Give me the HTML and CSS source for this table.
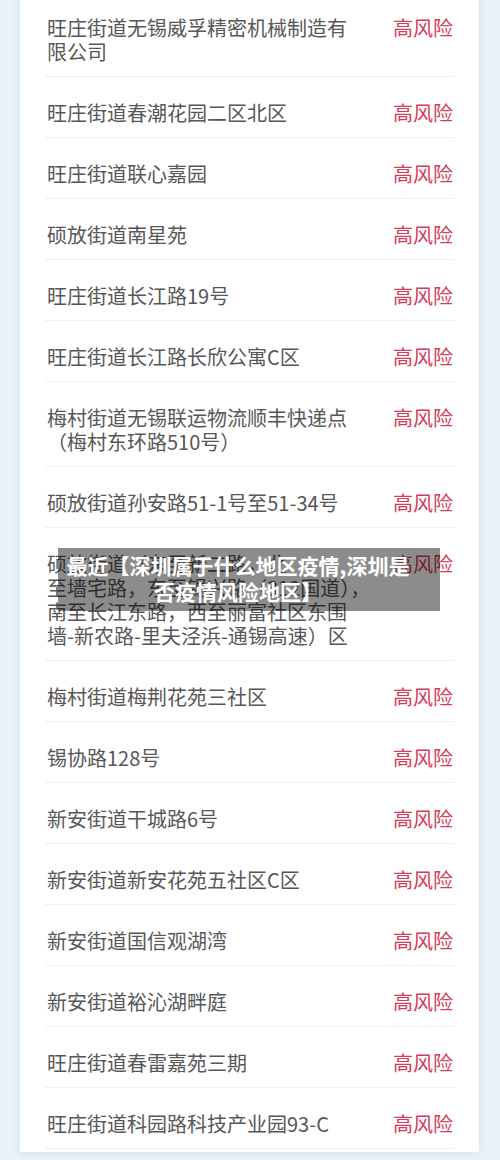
FILE: index.html
```html
<!DOCTYPE html>
<html lang="zh-CN">
<head>
  <meta charset="UTF-8">
  <title>高风险地区</title>
  <link rel="stylesheet" href="styles.css">
</head>
<body>
  <div class="card">
    <ul class="area-list">
      <li class="area"><span class="name">旺庄街道无锡威孚精密机械制造有<br>限公司</span><span class="risk">高风险</span></li>
      <li class="area"><span class="name">旺庄街道春潮花园二区北区</span><span class="risk">高风险</span></li>
      <li class="area"><span class="name">旺庄街道联心嘉园</span><span class="risk">高风险</span></li>
      <li class="area"><span class="name">硕放街道南星苑</span><span class="risk">高风险</span></li>
      <li class="area"><span class="name">旺庄街道长江路19号</span><span class="risk">高风险</span></li>
      <li class="area"><span class="name">旺庄街道长江路长欣公寓C区</span><span class="risk">高风险</span></li>
      <li class="area"><span class="name">梅村街道无锡联运物流顺丰快递点<br>（梅村东环路510号）</span><span class="risk">高风险</span></li>
      <li class="area"><span class="name">硕放街道孙安路51-1号至51-34号</span><span class="risk">高风险</span></li>
      <li class="area"><span class="name">硕放街道（东至新二路，北<br>至墙宅路，东至锡兴路（312国道），<br>南至长江东路，西至丽富社区东围<br>墙-新农路-里夫泾浜-通锡高速）区</span><span class="risk">高风险</span></li>
      <li class="area"><span class="name">梅村街道梅荆花苑三社区</span><span class="risk">高风险</span></li>
      <li class="area"><span class="name">锡协路128号</span><span class="risk">高风险</span></li>
      <li class="area"><span class="name">新安街道干城路6号</span><span class="risk">高风险</span></li>
      <li class="area"><span class="name">新安街道新安花苑五社区C区</span><span class="risk">高风险</span></li>
      <li class="area"><span class="name">新安街道国信观湖湾</span><span class="risk">高风险</span></li>
      <li class="area"><span class="name">新安街道裕沁湖畔庭</span><span class="risk">高风险</span></li>
      <li class="area"><span class="name">旺庄街道春雷嘉苑三期</span><span class="risk">高风险</span></li>
      <li class="area"><span class="name">旺庄街道科园路科技产业园93-C</span><span class="risk">高风险</span></li>
    </ul>
  </div>

  <!-- 标题浮层 -->
  <div class="caption">最近【深圳属于什么地区疫情,深圳是<br>否疫情风险地区】</div>
</body>
</html>
```

FILE: styles.css
```css
body {
  margin: 0;
  background: #e9f2fa;
  font-family: "Noto Sans CJK SC", "Noto Sans", sans-serif;
  height: 1160px;
  overflow: hidden;
}

.card {
  background: #fff;
  margin: 0 21px 0 20px;
  min-height: 1160px;
  box-shadow: 0 0 8px rgba(150, 185, 220, 0.35);
}

.area-list {
  list-style: none;
  margin: -8px 25px 0 25px;
  padding: 0;
}

.area {
  display: flex;
  justify-content: space-between;
  align-items: flex-start;
  padding: 24px 1px 12px 2px;
  border-bottom: 1px solid #efefef;
  font-size: 20px;
  line-height: 24px;
}

.name {
  color: #575757;
  white-space: nowrap;
}

.risk {
  color: #d63b58;
  white-space: nowrap;
}

.caption {
  position: absolute;
  top: 548px;
  left: 58px;
  width: 382px;
  padding: 4px 22px 7px 0;
  box-sizing: border-box;
  background: rgba(0, 0, 0, 0.45);
  color: #fff;
  font-size: 21px;
  font-weight: 700;
  line-height: 26px;
  text-align: center;
  white-space: nowrap;
}
```
